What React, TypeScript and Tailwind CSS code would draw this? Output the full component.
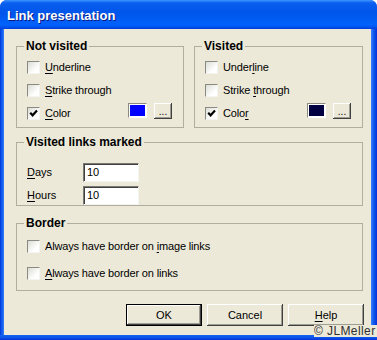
import React from "react";

const FONT = { fontFamily: '"Liberation Sans", Arial, sans-serif' };

function Check({ checked }: { checked?: boolean }) {
  return (
    <div className="w-[13px] h-[13px] shrink-0 border border-t-[#8a8a80] border-l-[#8a8a80] border-b-[#f4f4f0] border-r-[#f4f4f0] bg-[linear-gradient(135deg,#dcdcd6,#ffffff_70%)] flex items-center justify-center">
      {checked && (
        <svg width="9" height="9" viewBox="0 0 9 9">
          <path d="M1.2 3.8 L3.6 6.3 L8 1.6" stroke="#000" strokeWidth="2.2" fill="none" />
        </svg>
      )}
    </div>
  );
}

function U({ children }: { children: React.ReactNode }) {
  return <span className="underline underline-offset-[2px]">{children}</span>;
}

function Group({
  title,
  className,
  children,
}: {
  title: string;
  className: string;
  children: React.ReactNode;
}) {
  return (
    <div className={"border border-[#b0ae9f] flex flex-col " + className}>
      <span className="self-start -mt-[8px] ml-[7px] px-[2px] bg-[#ece9d8] font-bold text-[12px] leading-[14px] text-black">
        {title}
      </span>
      {children}
    </div>
  );
}

function Row({ checked, label, mt }: { checked?: boolean; label: React.ReactNode; mt: string }) {
  return (
    <div className={"flex items-center h-[13px] pl-[10px] " + mt}>
      <Check checked={checked} />
      <span className="ml-[5px] text-[11px] tracking-[-0.15px] leading-[13px] text-black">{label}</span>
    </div>
  );
}

function ColorRow({ label, color }: { label: React.ReactNode; color: string }) {
  return (
    <div className="flex items-start h-[13px] pl-[10px] pr-[11px] mt-[10px]">
      <Check checked />
      <span className="ml-[5px] flex-1 text-[11px] tracking-[-0.15px] leading-[13px] text-black">{label}</span>
      <div className="-mt-[4px] w-[19px] h-[15px] border border-t-[#8a8a80] border-l-[#8a8a80] border-b-white border-r-white p-[1px] bg-white">
        <div className="w-full h-full" style={{ background: color }} />
      </div>
      <div className="-mt-[4px] ml-[7px] w-[18px] h-[16px] bg-[#ece9d8] shadow-[inset_-1px_-1px_#404040,inset_1px_1px_#ffffff,inset_-2px_-2px_#9d9d92] flex items-end justify-center pb-[3px] text-[10px] leading-[8px] text-black">
        ...
      </div>
    </div>
  );
}

function Button({ children, def }: { children: React.ReactNode; def?: boolean }) {
  return (
    <div
      className={
        "w-[76px] h-[22px] flex items-center justify-center text-[11px] text-black bg-[#ece9d8] " +
        (def
          ? "border border-black shadow-[inset_-1px_-1px_#404040,inset_1px_1px_#ffffff,inset_-2px_-2px_#9d9d92]"
          : "shadow-[inset_-1px_-1px_#404040,inset_1px_1px_#ffffff,inset_-2px_-2px_#9d9d92]")
      }
    >
      {children}
    </div>
  );
}

function Field({ label }: { label: React.ReactNode }) {
  return (
    <div className="flex items-center h-[19px] pl-[10px]">
      <span className="w-[56px] text-[11px] text-black">{label}</span>
      <div className="w-[56px] h-[19px] bg-white border border-t-[#7a7a72] border-l-[#7a7a72] border-b-[#f4f4f0] border-r-[#f4f4f0] shadow-[inset_1px_1px_#404040] flex items-center pl-[3px] text-[11px] text-black">
        10
      </div>
    </div>
  );
}

export default function App() {
  return (
    <div
      className="relative w-[377px] h-[340px] overflow-hidden rounded-t-[7px] bg-[#0a4fe0] flex flex-col"
      style={FONT}
    >
      <div className="h-[29px] shrink-0 flex items-center pl-[7px] pt-[2px] bg-[linear-gradient(180deg,#3d95ff_0%,#0a5ff0_10%,#0055ea_45%,#0062fb_85%,#0056f0_92%,#003ed8_100%)]">
        <span className="text-white font-bold text-[13px] [text-shadow:1px_1px_#0a1883]">
          Link presentation
        </span>
      </div>
      <div className="flex-1 flex">
        <div className="w-[4px] bg-[linear-gradient(90deg,#0831d9,#0a55ea,#1664f0,#3a80ff)]" />
        <div className="w-[367px] h-[306px] bg-[#ece9d8] flex flex-col pl-[12px] pt-[17px]">
          <div className="flex gap-[10px]">
            <Group title="Not visited" className="w-[168px] h-[82px]">
              <Row mt="mt-[8px]" label={<><U>U</U>nderline</>} />
              <Row mt="mt-[10px]" label={<><U>S</U>trike through</>} />
              <ColorRow color="#0000ff" label={<><U>C</U>olor</>} />
            </Group>
            <Group title="Visited" className="w-[169px] h-[82px]">
              <Row mt="mt-[8px]" label={<>Under<U>l</U>ine</>} />
              <Row mt="mt-[10px]" label={<>Strike <U>t</U>hrough</>} />
              <ColorRow color="#000040" label={<>Colo<U>r</U></>} />
            </Group>
          </div>
          <Group title="Visited links marked" className="w-[347px] h-[64px] mt-[14px] gap-[4px]">
            <div className="mt-[6px]" />
            <Field label={<><U>D</U>ays</>} />
            <Field label={<><U>H</U>ours</>} />
          </Group>
          <Group title="Border" className="w-[347px] h-[68px] mt-[17px]">
            <Row mt="mt-[10px]" label={<>Always have border on <U>i</U>mage links</>} />
            <Row mt="mt-[14px]" label={<><U>A</U>lways have border on links</>} />
          </Group>
          <div className="flex gap-[5px] pl-[110px] mt-[13px]">
            <Button def>OK</Button>
            <Button>Cancel</Button>
            <Button>
              <U>H</U>elp
            </Button>
          </div>
        </div>
        <div className="flex-1 bg-[linear-gradient(90deg,#3a80ff,#0a55ea,#0831d9)]" />
      </div>
      <div className="h-[5px] shrink-0 bg-[linear-gradient(180deg,#1664f0,#0a55ea,#0831d9)]" />
      <span className="absolute left-[314px] top-[325px] bg-[#ece9d8] text-[12px] tracking-[0.4px] leading-[12px] text-[#303030] pr-[2px] whitespace-nowrap">
        © JLMeller
      </span>
    </div>
  );
}
